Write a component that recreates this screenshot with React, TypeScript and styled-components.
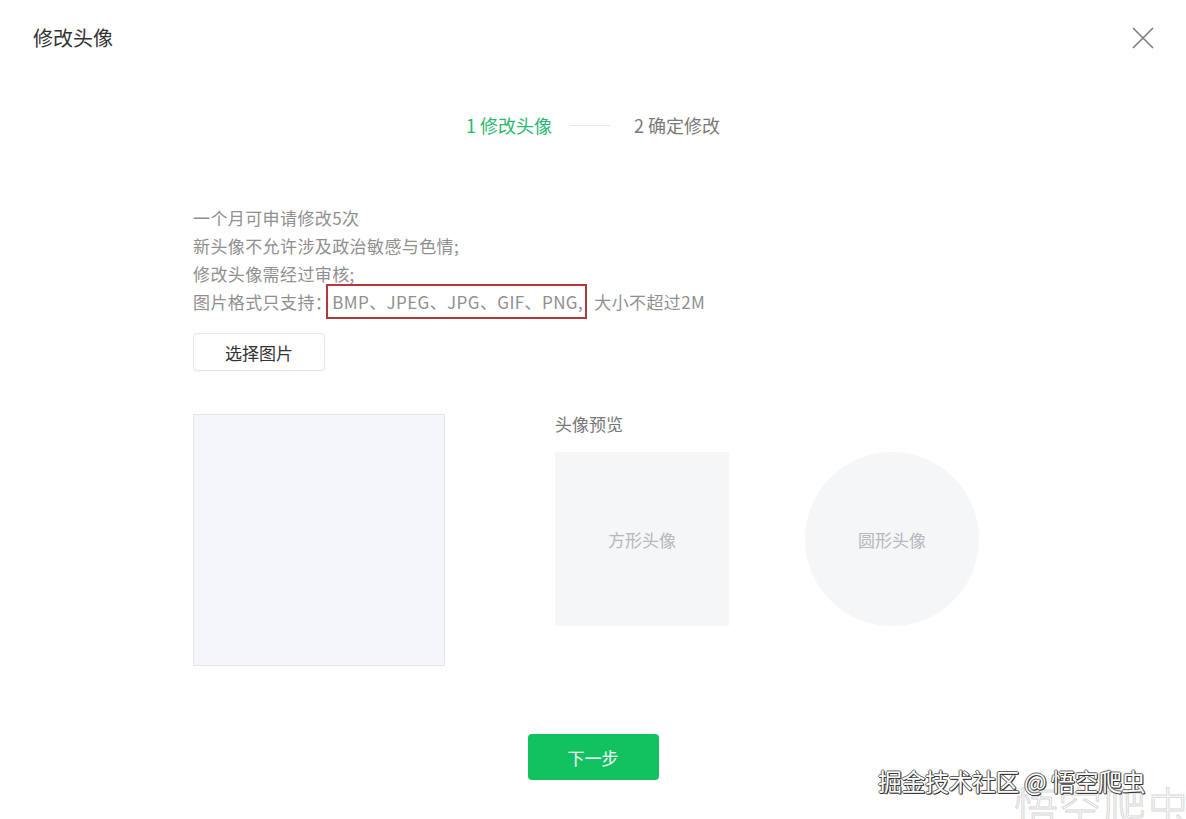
import styled, { createGlobalStyle } from 'styled-components'

const GlobalStyle = createGlobalStyle`
  html, body {
    margin: 0;
    padding: 0;
    background: #ffffff;
  }
  body {
    font-family: 'Noto Sans CJK SC', 'Noto Sans', sans-serif;
  }
`

const steps = ['1 修改头像', '2 确定修改']

const notes = ['一个月可申请修改5次', '新头像不允许涉及政治敏感与色情;', '修改头像需经过审核;']

export default function App() {
  return (
    <>
      <GlobalStyle />
      <Dialog>
        <Header>
          <Title>修改头像</Title>
          <CloseButton aria-label="关闭">
            <svg width="22" height="22" viewBox="0 0 22 22">
              <path d="M1 1L21 21M21 1L1 21" stroke="#7d7d7d" strokeWidth="1.6" fill="none" />
            </svg>
          </CloseButton>
        </Header>

        <Steps>
          <Step active>{steps[0]}</Step>
          <StepLine />
          <Step>{steps[1]}</Step>
        </Steps>

        <Content>
          <Notes>
            {notes.map((n) => (
              <p key={n}>{n}</p>
            ))}
            <p>
              图片格式只支持：
              <Highlight>BMP、JPEG、JPG、GIF、PNG,</Highlight> 大小不超过2M
            </p>
          </Notes>

          <SelectButton>选择图片</SelectButton>

          <PreviewRow>
            <CropArea />
            <PreviewSection>
              <PreviewTitle>头像预览</PreviewTitle>
              <PreviewShapes>
                <PreviewBox>方形头像</PreviewBox>
                <PreviewBox round>圆形头像</PreviewBox>
              </PreviewShapes>
            </PreviewSection>
          </PreviewRow>
        </Content>

        <Footer>
          <NextButton>下一步</NextButton>
        </Footer>

        <Watermark>
          <WatermarkBig>悟空爬虫</WatermarkBig>
          <WatermarkText>掘金技术社区 @ 悟空爬虫</WatermarkText>
        </Watermark>
      </Dialog>
    </>
  )
}

const Dialog = styled('div')`
  position: relative;
  width: 1186px;
  height: 819px;
  overflow: hidden;
  background: #ffffff;
`

const Header = styled('div')`
  display: flex;
  align-items: center;
  justify-content: space-between;
  padding: 24px 32px 0 33px;
  height: 28px;
`

const Title = styled('h2')`
  margin: 0;
  font-size: 20px;
  font-weight: 400;
  line-height: 28px;
  color: #333333;
`

const CloseButton = styled('button')`
  border: 0;
  background: none;
  padding: 0;
  width: 22px;
  height: 22px;
  display: flex;
  cursor: pointer;
`

const Steps = styled('div')`
  display: flex;
  align-items: center;
  justify-content: center;
  gap: 18px;
  margin-top: 60px;
  height: 26px;
`

const Step = styled('span')<{ active?: boolean }>`
  font-size: 18px;
  line-height: 26px;
  color: ${(p) => (p.active ? '#2bb673' : '#7a7a7a')};
`

const StepLine = styled('span')`
  width: 40px;
  height: 1px;
  background: #e6e6e6;
  margin-right: 6px;
`

const Content = styled('div')`
  padding-left: 193px;
  margin-top: 66px;
`

const Notes = styled('div')`
  font-size: 17px;
  line-height: 28px;
  letter-spacing: 0.4px;
  color: #8f8f8f;

  p {
    margin: 0;
    white-space: nowrap;
  }
`

const Highlight = styled('span')`
  border: 2px solid #b4373b;
  padding: 3px 2px 3px 4px;
  margin-left: -6px;
  margin-right: 3px;
`

const SelectButton = styled('button')`
  display: block;
  margin-top: 17px;
  width: 132px;
  height: 38px;
  border: 1px solid #e6e6e6;
  border-radius: 4px;
  background: #ffffff;
  font-family: inherit;
  font-size: 17px;
  color: #333333;
  box-shadow: 0 1px 2px rgba(0, 0, 0, 0.04);
`

const PreviewRow = styled('div')`
  display: flex;
  gap: 110px;
  margin-top: 43px;
`

const CropArea = styled('div')`
  width: 250px;
  height: 250px;
  border: 1px solid #e2e4e7;
  background: #f4f6f9;
`

const PreviewSection = styled('div')`
  display: flex;
  flex-direction: column;
`

const PreviewTitle = styled('div')`
  font-size: 17px;
  line-height: 20px;
  color: #777777;
`

const PreviewShapes = styled('div')`
  display: flex;
  gap: 76px;
  margin-top: 18px;
`

const PreviewBox = styled('div')<{ round?: boolean }>`
  width: 174px;
  height: 174px;
  border-radius: ${(p) => (p.round ? '50%' : '0')};
  background: #f4f6f8;
  display: flex;
  align-items: center;
  justify-content: center;
  font-size: 17px;
  color: #b5b8bc;
`

const Footer = styled('div')`
  display: flex;
  justify-content: center;
  margin-top: 68px;
`

const NextButton = styled('button')`
  width: 131px;
  height: 46px;
  border: 0;
  border-radius: 4px;
  background: #12c160;
  color: #ffffff;
  font-family: inherit;
  font-size: 17px;
  cursor: pointer;
`

const Watermark = styled('div')`
  position: absolute;
  left: 878px;
  top: 764px;
  width: 308px;
  height: 55px;
  pointer-events: none;
`

const WatermarkText = styled('div')`
  position: absolute;
  left: 0;
  top: 0;
  font-size: 24px;
  line-height: 34px;
  color: #ffffff;
  white-space: nowrap;
  letter-spacing: -0.5px;
  text-shadow: 1px 1px 0 #333, -1px 0 0 #666, 0 -1px 0 #666, 1px 0 0 #333, 0 1px 0 #333;
`

const WatermarkBig = styled('div')`
  position: absolute;
  left: 136px;
  top: 14px;
  font-size: 44px;
  line-height: 56px;
  color: transparent;
  -webkit-text-stroke: 1px #d8d8d8;
  white-space: nowrap;
  font-weight: 300;
`
